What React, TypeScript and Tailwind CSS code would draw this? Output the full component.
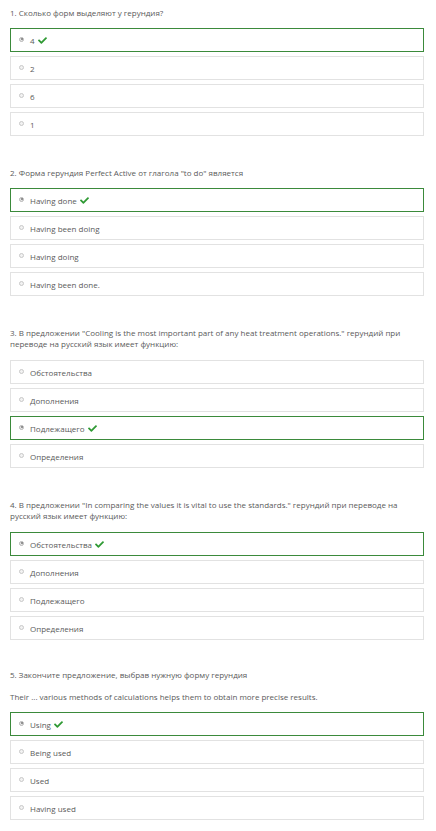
import React from "react";
import { FaCheck } from "react-icons/fa";

type Q = { title: string[]; sub?: string; options: string[]; correct: number };

const questions: Q[] = [
  { title: ["1. Сколько форм выделяют у герундия?"], options: ["4", "2", "6", "1"], correct: 0 },
  {
    title: ['2. Форма герундия Perfect Active от глагола "to do" является'],
    options: ["Having done", "Having been doing", "Having doing", "Having been done."],
    correct: 0,
  },
  {
    title: [
      '3. В предложении "Cooling is the most important part of any heat treatment operations." герундий при',
      "переводе на русский язык имеет функцию:",
    ],
    options: ["Обстоятельства", "Дополнения", "Подлежащего", "Определения"],
    correct: 2,
  },
  {
    title: [
      '4. В предложении "In comparing the values it is vital to use the standards." герундий при переводе на',
      "русский язык имеет функцию:",
    ],
    options: ["Обстоятельства", "Дополнения", "Подлежащего", "Определения"],
    correct: 0,
  },
  {
    title: ["5. Закончите предложение, выбрав нужную форму герундия"],
    sub: "Their ... various methods of calculations helps them to obtain more precise results.",
    options: ["Using", "Being used", "Used", "Having used"],
    correct: 0,
  },
];

function Radio({ checked }: { checked: boolean }) {
  return (
    <span
      className={
        checked
          ? "flex h-[5px] w-[5px] items-center justify-center rounded-full border border-[#b5b5b5] bg-[#e8e8e8]"
          : "block h-[5px] w-[5px] rounded-full border border-[#c8c8c8] bg-[#f2f2f2]"
      }
    >
      {checked && <span className="block h-[2px] w-[2px] rounded-full bg-[#777]" />}
    </span>
  );
}

export default function App() {
  return (
    <div className="w-[436px] min-h-[831px] bg-white pt-[7px] font-['Open_Sans',sans-serif] text-[8px] leading-[11px] text-[#5a5a5a]">
      <div className="flex flex-col">
        {questions.map((q, qi) => (
          <div
            key={qi}
            className={qi === 0 ? "flex flex-col" : qi === 4 ? "mt-[29px] flex flex-col" : "mt-[31px] flex flex-col"}
          >
            <div className={q.title.length > 1 ? "mb-[11px] pl-[10px]" : "mb-[10px] pl-[10px]"}>
              {q.title.map((t, i) => (
                <div key={i} className="whitespace-nowrap">{t}</div>
              ))}
              {q.sub && <div className="mt-[11px] whitespace-nowrap">{q.sub}</div>}
            </div>
            <div className="flex flex-col gap-[4px]">
              {q.options.map((o, oi) => {
                const ok = oi === q.correct;
                return (
                  <div
                    key={oi}
                    className={
                      ok
                        ? "ml-[10px] flex h-[24px] w-[414px] items-center border border-[#3b8a3b] bg-white pl-[8px]"
                        : "ml-[10px] flex h-[24px] w-[414px] items-center border border-[#e2e2e2] bg-white pl-[8px]"
                    }
                  >
                    <span className="mr-[6px] -mt-[2px]">
                      <Radio checked={ok} />
                    </span>
                    <span>{o}</span>
                    {ok && <FaCheck className="ml-[3px] text-[9px] text-[#2f9a34]" />}
                  </div>
                );
              })}
            </div>
          </div>
        ))}
      </div>
    </div>
  );
}
